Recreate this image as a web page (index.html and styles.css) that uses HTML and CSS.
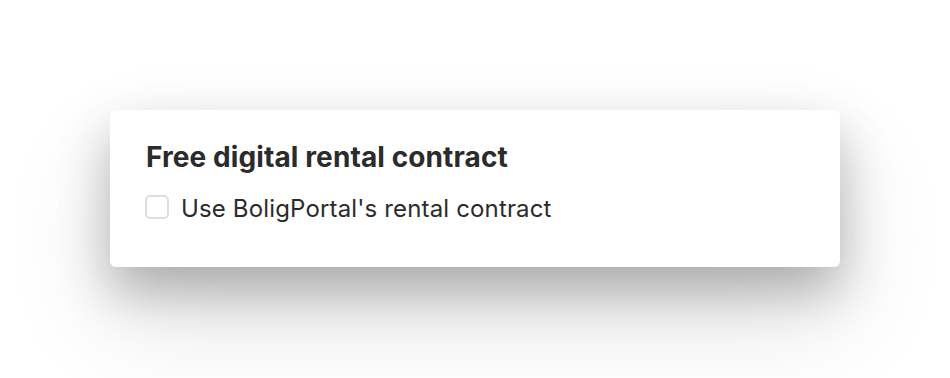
FILE: index.html
```html
<!DOCTYPE html>
<html lang="en">
<head>
<meta charset="utf-8">
<title>Rental contract</title>
<link rel="stylesheet" href="styles.css">
</head>
<body>
<div class="stage">
  <section class="card">
    <h2 class="card-title">Free digital rental contract</h2>
    <label class="check">
      <input type="checkbox" class="check-input">
      <span class="check-box"></span>
      <span class="check-label">Use BoligPortal's rental contract</span>
    </label>
  </section>
</div>
</body>
</html>
```
FILE: styles.css
```css
html, body {
  margin: 0;
  padding: 0;
  background: #ffffff;
}
body {
  font-family: Inter, "Noto Sans", "Liberation Sans", sans-serif;
  color: #2b2b2b;
  width: 950px;
  height: 378px;
  overflow: hidden;
}
.stage {
  padding: 110px 110px 0 110px;
}
.card {
  box-sizing: border-box;
  width: 730px;
  height: 157px;
  background: #ffffff;
  border-radius: 6px;
  padding: 30px 36px;
  box-shadow: 0 24px 50px rgba(0, 0, 0, 0.26), 0 50px 110px rgba(0, 0, 0, 0.12);
}
.card-title {
  margin: 0 0 19px 0;
  font-size: 28px;
  line-height: 34px;
  font-weight: 700;
  letter-spacing: 0.1px;
}
.check {
  display: flex;
  align-items: flex-start;
  gap: 12px;
  cursor: pointer;
}
.check-input {
  display: none;
}
.check-box {
  box-sizing: border-box;
  width: 24px;
  height: 24px;
  margin-top: 2px;
  margin-left: -1px;
  border: 2px solid #dedede;
  border-radius: 5px;
  background: #fff;
  flex: none;
}
.check-label {
  font-size: 24px;
  line-height: 32px;
  letter-spacing: 0.15px;
}
```
